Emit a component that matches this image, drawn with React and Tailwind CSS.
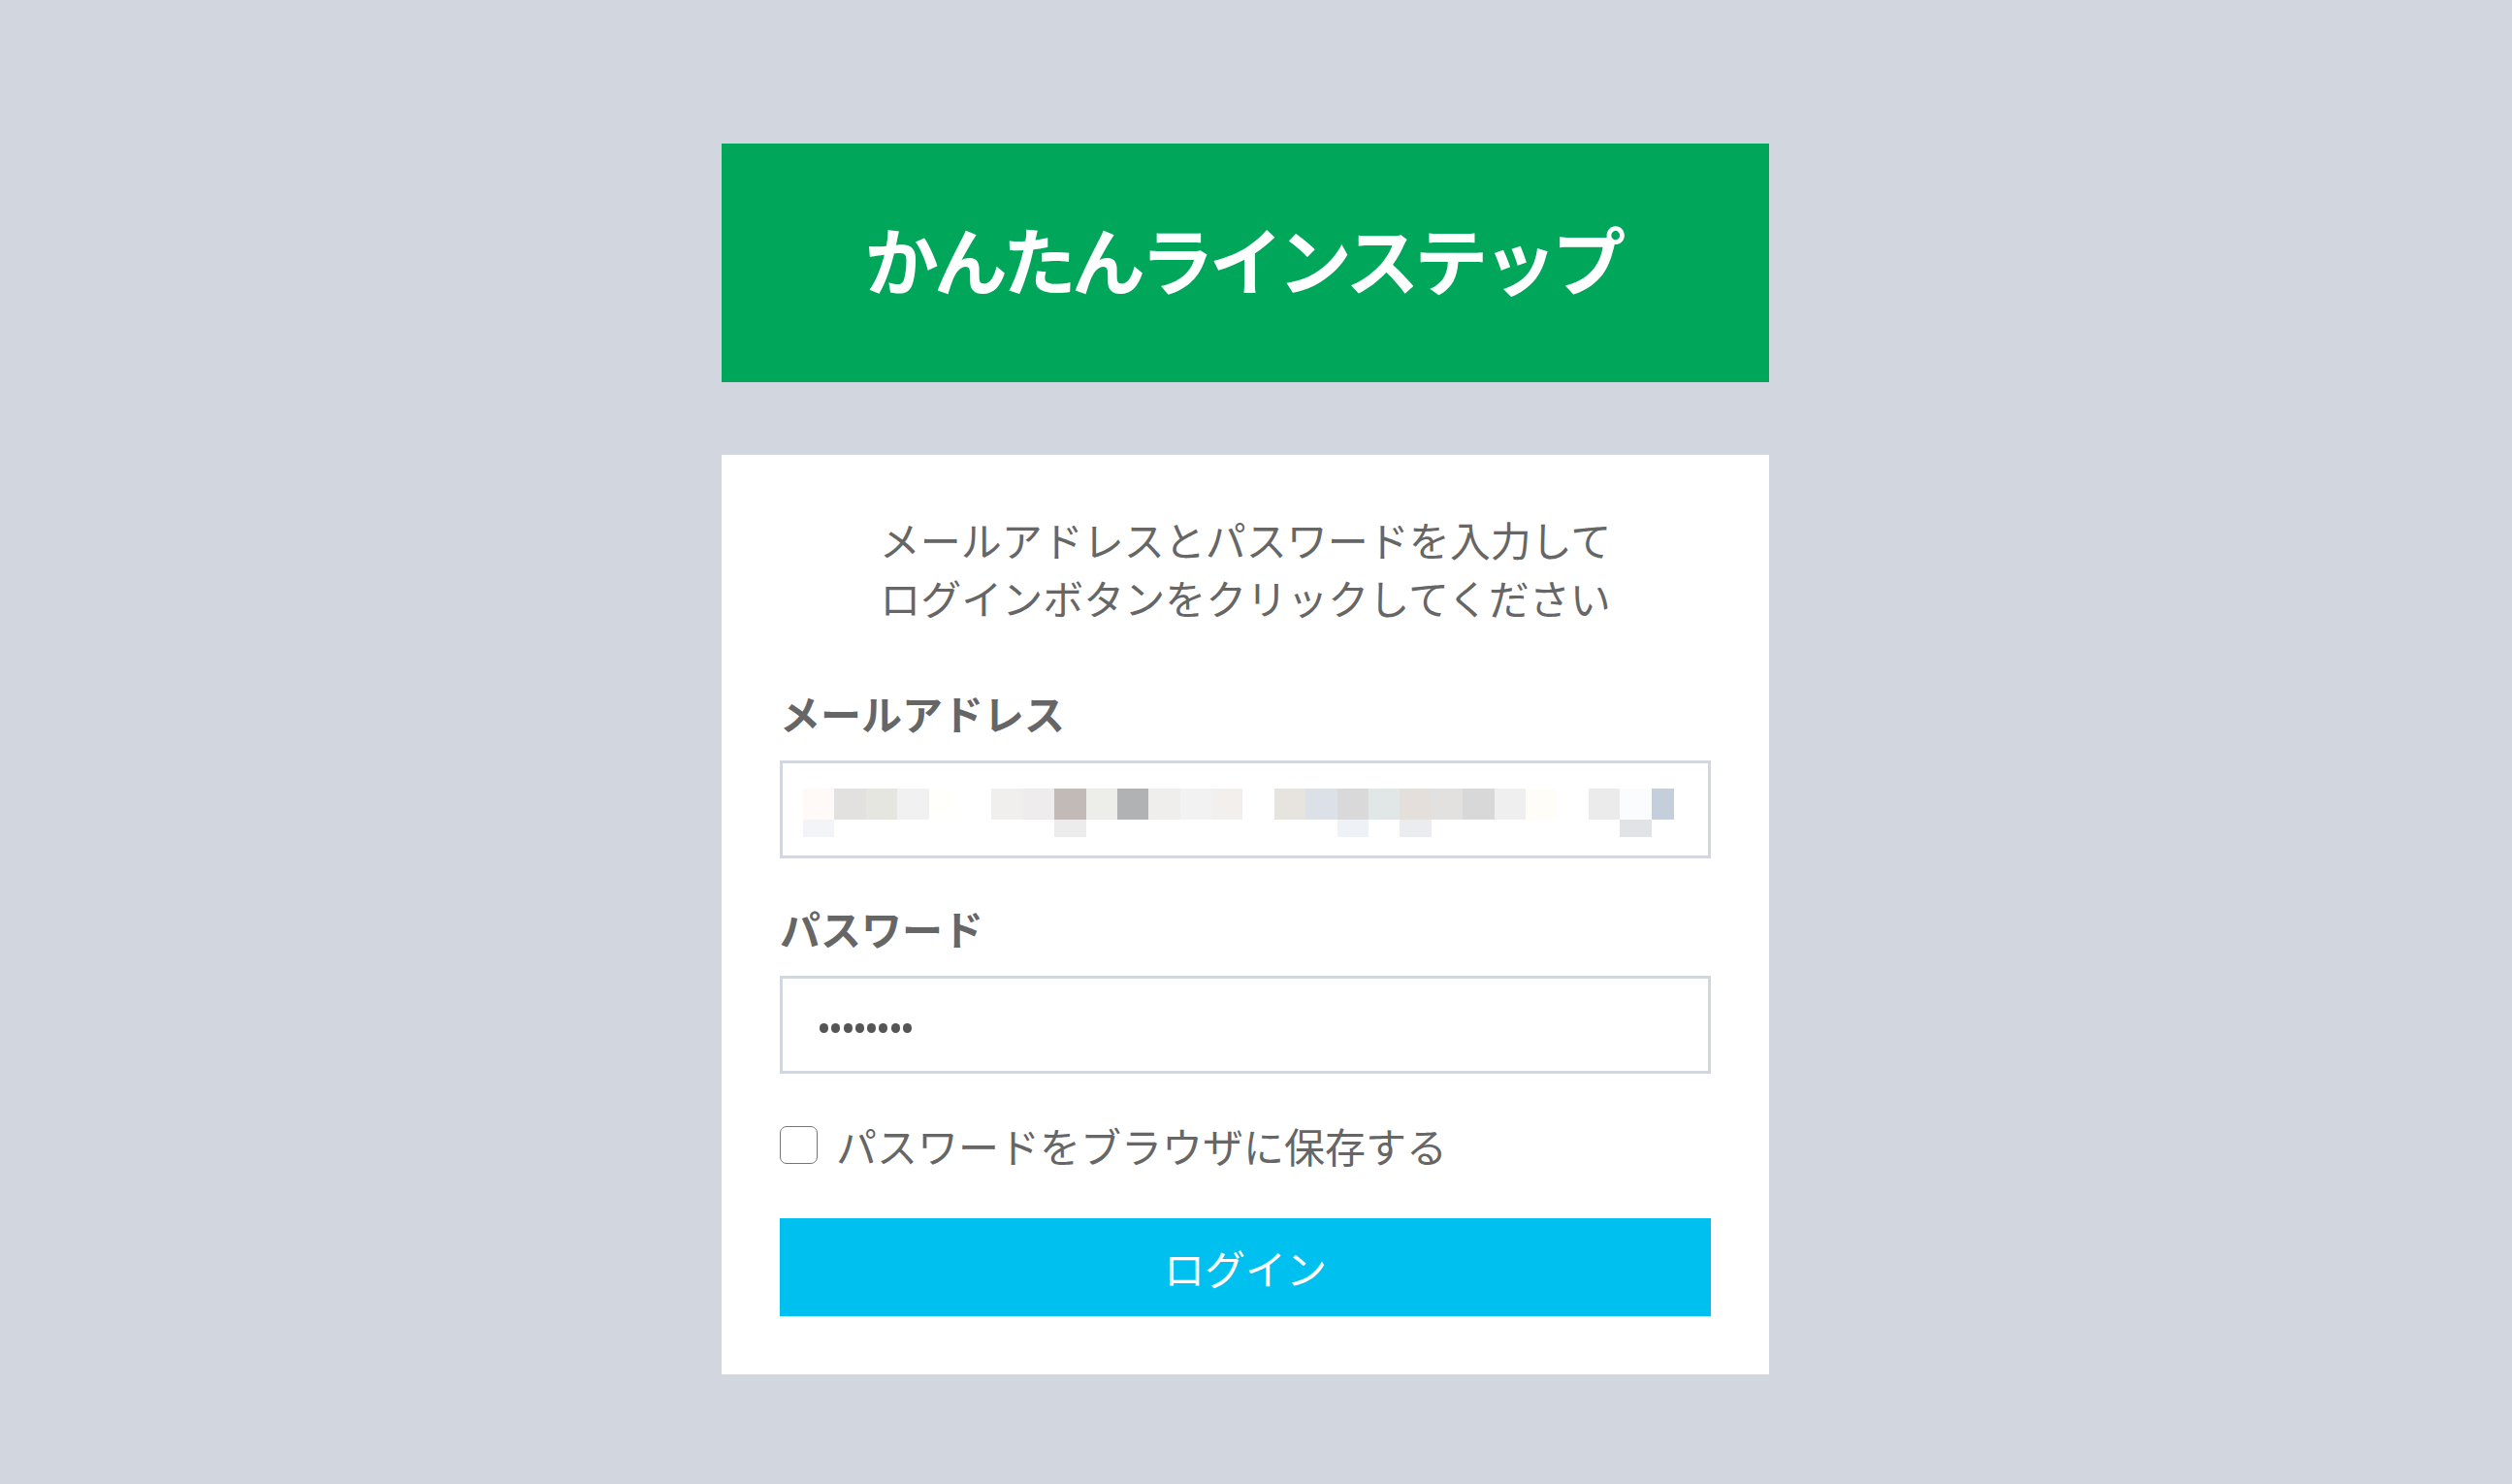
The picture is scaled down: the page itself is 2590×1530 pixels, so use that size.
import React from 'react';

const row1 = [
  'bg-[#fffaf7]', 'bg-[#e2e1df]', 'bg-[#e6e6e1]', 'bg-[#f1f1f1]', 'bg-[#fffffb]', 'bg-transparent',
  'bg-[#f0efee]', 'bg-[#eeecec]', 'bg-[#c2bab7]', 'bg-[#edede9]', 'bg-[#b1b2b3]', 'bg-[#efeeed]',
  'bg-[#f2f2f2]', 'bg-[#f3efec]', 'bg-transparent', 'bg-[#e7e3de]', 'bg-[#dce0e7]', 'bg-[#d9d9d9]',
  'bg-[#e1e6e6]', 'bg-[#e4dfdb]', 'bg-[#e2e1df]', 'bg-[#d8d8d8]', 'bg-[#efefef]', 'bg-[#fefdf8]',
  'bg-transparent', 'bg-[#ecebeb]', 'bg-[#fbfcfd]', 'bg-[#c5cfdb]',
];

const row2 = {
  0: 'bg-[#f3f4f8]',
  8: 'bg-[#ececec]',
  17: 'bg-[#eef2f6]',
  19: 'bg-[#ebecf0]',
  26: 'bg-[#e1e3e7]',
};

const FONT = { fontFamily: "'Noto Sans CJK JP', 'Noto Sans', sans-serif" };

const Mosaic = () => (
  <div className="flex flex-col">
    <div className="flex h-[32px]">
      {row1.map((c, i) => (
        <div key={i} className={`h-full ${i === 27 ? 'w-[23px]' : 'w-[32.4px]'} ${c}`}></div>
      ))}
    </div>
    <div className="flex h-[18px]">
      {row1.map((_, i) => (
        <div key={i} className={`h-full ${i === 27 ? 'w-[23px]' : 'w-[32.4px]'} ${row2[i] || 'bg-transparent'}`}></div>
      ))}
    </div>
  </div>
);

export default function App() {
  return (
    <div className="min-h-screen w-full bg-[#d2d6de] flex justify-center pt-[148px] pr-[22px]" style={FONT}>
      <div className="w-[1080px] flex flex-col">
        <div className="h-[246px] bg-[#00a65a] flex items-center justify-center">
          <h1 className="text-[76px] font-bold text-white tracking-[-5px] leading-none pr-[5px] pb-[10px]">かんたんラインステップ</h1>
        </div>

        <div className="mt-[75px] bg-white px-[60px] pt-[57px] pb-[60px] flex flex-col">
          <p className="text-center text-[42px] leading-[60px] text-[#666]">
            メールアドレスとパスワードを入力して
            <br />
            ログインボタンをクリックしてください
          </p>

          <label className="mt-[57px] text-[42px] leading-[63px] font-bold text-[#666]">メールアドレス</label>
          <div className="mt-[18px] h-[101px] border-[3px] border-[#d2d6de] flex items-start pl-[21px] pt-[26px] overflow-hidden">
            <Mosaic />
          </div>

          <label className="mt-[40px] text-[42px] leading-[63px] font-bold text-[#666]">パスワード</label>
          <div className="mt-[18px] h-[101px] border-[3px] border-[#d2d6de] flex items-start pl-[38px] pt-[46px]">
            <div className="flex gap-[3.3px]">
              {[0, 1, 2, 3, 4, 5, 6, 7].map((i) => (
                <div key={i} className="w-[9px] h-[10px] rounded-full bg-[#555]"></div>
              ))}
            </div>
          </div>

          <div className="mt-[42px] h-[63px] flex items-center gap-[19px]">
            <div className="w-[39px] h-[39px] rounded-[7px] border-[1.5px] border-[#767676] bg-white"></div>
            <span className="text-[42px] leading-[63px] text-[#666]">パスワードをブラウザに保存する</span>
          </div>

          <button className="mt-[44px] h-[101px] bg-[#00c0ef] text-white text-[42px] leading-none flex items-center justify-center">
            ログイン
          </button>
        </div>
      </div>
    </div>
  );
}
